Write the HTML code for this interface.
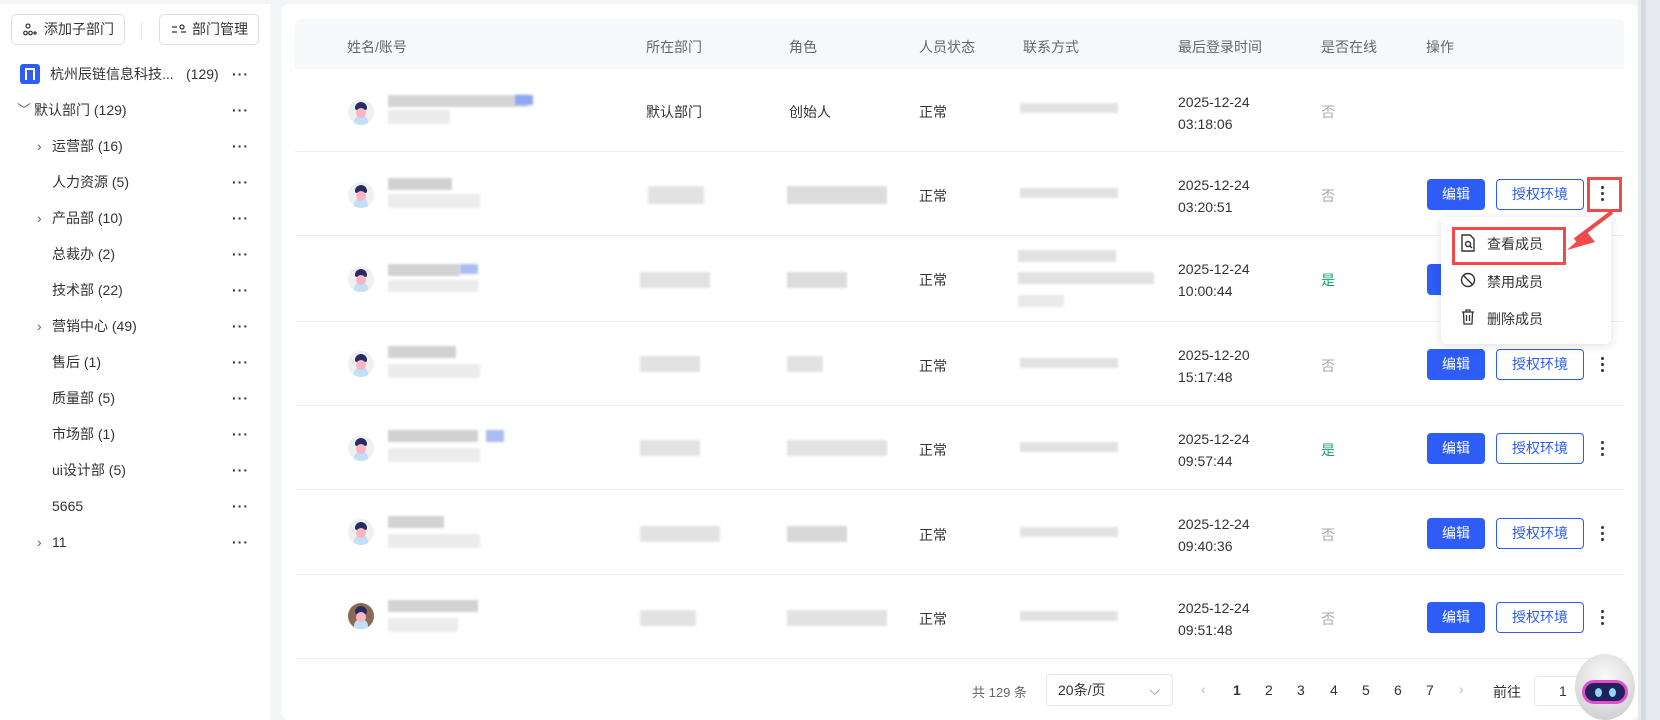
<!DOCTYPE html>
<html><head><meta charset="utf-8"><style>
*{box-sizing:border-box;margin:0;padding:0}
body{width:1660px;height:720px;overflow:hidden;background:#f4f5f7;font-family:"Liberation Sans","Noto Sans CJK SC",sans-serif;font-size:14px;color:#333;position:relative}
.side{position:absolute;left:0;top:4px;width:270px;height:716px;background:#fff}
.btn{position:absolute;height:31px;border:1px solid #dcdfe6;border-radius:5px;background:#fff;font-size:14px;line-height:29px;padding-left:32px;color:#333}
.tr{position:absolute;left:0;width:270px;height:36px;line-height:36px;font-size:14px;color:#333}
.dots{position:absolute;left:232px;top:0;letter-spacing:1px;font-weight:bold;font-size:14px}
.main{position:absolute;left:281px;top:4px;width:1357px;height:716px;background:#fff;border-radius:8px}
.hdr{position:absolute;left:295px;top:19px;width:1329px;height:50px;background:#f7f8fa;border-radius:6px 6px 0 0}
.h{position:absolute;top:37px;font-size:14px;color:#666}
.row{position:absolute;left:295px;width:1329px;border-bottom:1px solid #ebeef5}
.c{position:absolute;font-size:14px;color:#333}
.bl{position:absolute;background:#e2e2e2;filter:blur(1px);border-radius:1px}
.av{position:absolute;width:26px;height:26px;border-radius:50%;background:#f0f0f3;overflow:hidden}
.av:before{content:"";position:absolute;left:7px;top:3px;width:12px;height:8px;background:#2a2a66;border-radius:6px 6px 2px 2px}
.av:after{content:"";position:absolute;left:8px;top:9px;width:10px;height:10px;background:#f7b6c2;border-radius:50%;box-shadow:0 9px 0 2px #bfe0f6}
.ed{position:absolute;left:1427px;width:58px;height:31px;background:#2d5cf6;color:#fff;border-radius:4px;text-align:center;line-height:31px;font-size:14px}
.au{position:absolute;left:1496px;width:88px;height:31px;border:1px solid #2d5cf6;color:#2d5cf6;border-radius:4px;text-align:center;line-height:29px;font-size:14px;background:#fff}
.vd{position:absolute;left:1601px;width:4px}
.vd i{display:block;width:3px;height:3px;background:#333;border-radius:50%;margin-bottom:3px}
</style></head><body>
<div class="side">
 <div class="btn" style="left:11px;top:10px;width:114px">添加子部门<svg style="position:absolute;left:11px;top:8px" width="14" height="13" viewBox="0 0 14 13" fill="none" stroke="#333" stroke-width="1.2"><circle cx="5" cy="3" r="2"/><circle cx="2.5" cy="10" r="1.8"/><circle cx="7.5" cy="10" r="1.8"/><path d="M10 10h4M12 8v4"/></svg></div>
 <div style="position:absolute;left:141px;top:18px;width:1px;height:18px;background:#e3e6ec"></div>
 <div class="btn" style="left:159px;top:10px;width:100px">部门管理<svg style="position:absolute;left:12px;top:9px" width="14" height="12" viewBox="0 0 14 12" fill="none" stroke="#333" stroke-width="1.2"><path d="M0 3h5M0 8h5M9 8h5"/><circle cx="10" cy="3" r="2"/></svg></div>
 <div class="tr" style="top:52px"><span style="position:absolute;left:20px;top:8px;width:20px;height:20px;background:#2d5cf6;border-radius:3px"><span style="position:absolute;left:5px;top:4px;width:10px;height:12px;border:2px solid #fff;border-bottom:none"></span></span><span style="position:absolute;left:50px">杭州辰链信息科技...</span><span style="position:absolute;left:186px">(129)</span><span class="dots">···</span></div>
 <div class="tr" style="top:88px"><span style="position:absolute;left:17px;color:#666">﹀</span><span style="position:absolute;left:34px">默认部门 (129)</span><span class="dots">···</span></div>
 <div class="tr" style="top:124px"><span style="position:absolute;left:37px;color:#666">›</span><span style="position:absolute;left:52px">运营部 (16)</span><span class="dots">···</span></div>
 <div class="tr" style="top:160px"><span style="position:absolute;left:52px">人力资源 (5)</span><span class="dots">···</span></div>
 <div class="tr" style="top:196px"><span style="position:absolute;left:37px;color:#666">›</span><span style="position:absolute;left:52px">产品部 (10)</span><span class="dots">···</span></div>
 <div class="tr" style="top:232px"><span style="position:absolute;left:52px">总裁办 (2)</span><span class="dots">···</span></div>
 <div class="tr" style="top:268px"><span style="position:absolute;left:52px">技术部 (22)</span><span class="dots">···</span></div>
 <div class="tr" style="top:304px"><span style="position:absolute;left:37px;color:#666">›</span><span style="position:absolute;left:52px">营销中心 (49)</span><span class="dots">···</span></div>
 <div class="tr" style="top:340px"><span style="position:absolute;left:52px">售后 (1)</span><span class="dots">···</span></div>
 <div class="tr" style="top:376px"><span style="position:absolute;left:52px">质量部 (5)</span><span class="dots">···</span></div>
 <div class="tr" style="top:412px"><span style="position:absolute;left:52px">市场部 (1)</span><span class="dots">···</span></div>
 <div class="tr" style="top:448px"><span style="position:absolute;left:52px">ui设计部 (5)</span><span class="dots">···</span></div>
 <div class="tr" style="top:484px"><span style="position:absolute;left:52px">5665</span><span class="dots">···</span></div>
 <div class="tr" style="top:520px"><span style="position:absolute;left:37px;color:#666">›</span><span style="position:absolute;left:52px">11</span><span class="dots">···</span></div>
</div>
<div class="main"></div>
<div class="hdr"></div>
<div class="h" style="left:347px">姓名/账号</div><div class="h" style="left:646px">所在部门</div><div class="h" style="left:789px">角色</div><div class="h" style="left:919px">人员状态</div><div class="h" style="left:1023px">联系方式</div><div class="h" style="left:1178px">最后登录时间</div><div class="h" style="left:1321px">是否在线</div><div class="h" style="left:1426px">操作</div>

<div class="row" style="top:69px;height:83px"></div>
<div class="row" style="top:152px;height:84px"></div>
<div class="row" style="top:236px;height:86px"></div>
<div class="row" style="top:322px;height:84px"></div>
<div class="row" style="top:406px;height:84px"></div>
<div class="row" style="top:490px;height:85px"></div>
<div class="row" style="top:575px;height:84px"></div>

<!-- row 1 -->
<div class="av" style="left:348px;top:99px"></div>
<div class="bl" style="left:388px;top:95px;width:140px;height:12px;background:#d4d3d6"></div><div class="bl" style="left:515px;top:95px;width:18px;height:10px;background:#8fa7f3"></div><div class="bl" style="left:388px;top:110px;width:62px;height:14px;background:#ececec"></div>
<div class="c" style="left:646px;top:102px">默认部门</div><div class="c" style="left:789px;top:102px">创始人</div><div class="c" style="left:919px;top:102px">正常</div>
<div class="bl" style="left:1020px;top:103px;width:98px;height:10px"></div>
<div class="c" style="left:1178px;top:91px;line-height:22px">2025-12-24<br>03:18:06</div><div class="c" style="left:1321px;top:102px;color:#aaa">否</div>
<!-- row 2 -->
<div class="av" style="left:348px;top:182px"></div>
<div class="bl" style="left:388px;top:178px;width:64px;height:12px;background:#d0d0d0"></div><div class="bl" style="left:388px;top:194px;width:92px;height:14px;background:#ececec"></div>
<div class="bl" style="left:648px;top:186px;width:56px;height:18px"></div><div class="bl" style="left:787px;top:186px;width:100px;height:18px;background:#dcdcdc"></div>
<div class="c" style="left:919px;top:186px">正常</div>
<div class="bl" style="left:1020px;top:188px;width:98px;height:10px"></div>
<div class="c" style="left:1178px;top:174px;line-height:22px">2025-12-24<br>03:20:51</div><div class="c" style="left:1321px;top:186px;color:#aaa">否</div>
<div class="ed" style="top:179px">编辑</div><div class="au" style="top:179px">授权环境</div>
<div style="position:absolute;left:1587px;top:177px;width:35px;height:35px;border:3px solid #f04b4b"></div>
<div class="vd" style="top:186px"><i></i><i></i><i></i></div>
<!-- row 3 -->
<div class="av" style="left:348px;top:266px"></div>
<div class="bl" style="left:388px;top:264px;width:72px;height:12px;background:#d2d2d2"></div><div class="bl" style="left:460px;top:264px;width:18px;height:10px;background:#a9bdf3"></div><div class="bl" style="left:388px;top:280px;width:90px;height:12px;background:#ececec"></div>
<div class="bl" style="left:640px;top:272px;width:70px;height:16px"></div><div class="bl" style="left:787px;top:272px;width:60px;height:16px;background:#dcdcdc"></div>
<div class="c" style="left:919px;top:270px">正常</div>
<div class="bl" style="left:1018px;top:250px;width:98px;height:12px"></div><div class="bl" style="left:1018px;top:272px;width:136px;height:12px"></div><div class="bl" style="left:1018px;top:295px;width:46px;height:12px;background:#eaeaea"></div>
<div class="c" style="left:1178px;top:258px;line-height:22px">2025-12-24<br>10:00:44</div><div class="c" style="left:1321px;top:270px;color:#1aa36b">是</div>
<div class="ed" style="top:264px"></div>
<!-- row 4 -->
<div class="av" style="left:348px;top:351px"></div>
<div class="bl" style="left:388px;top:346px;width:68px;height:12px;background:#d2d2d2"></div><div class="bl" style="left:388px;top:364px;width:92px;height:14px;background:#ececec"></div>
<div class="bl" style="left:640px;top:356px;width:60px;height:16px"></div><div class="bl" style="left:787px;top:356px;width:36px;height:16px"></div>
<div class="c" style="left:919px;top:356px">正常</div>
<div class="bl" style="left:1020px;top:358px;width:98px;height:10px"></div>
<div class="c" style="left:1178px;top:344px;line-height:22px">2025-12-20<br>15:17:48</div><div class="c" style="left:1321px;top:356px;color:#aaa">否</div>
<div class="ed" style="top:349px">编辑</div><div class="au" style="top:349px">授权环境</div><div class="vd" style="top:357px"><i></i><i></i><i></i></div>
<!-- row 5 -->
<div class="av" style="left:348px;top:435px"></div>
<div class="bl" style="left:388px;top:430px;width:90px;height:12px;background:#d2d2d2"></div><div class="bl" style="left:486px;top:430px;width:18px;height:12px;background:#a9bdf3"></div><div class="bl" style="left:388px;top:448px;width:92px;height:14px;background:#ececec"></div>
<div class="bl" style="left:640px;top:440px;width:60px;height:16px"></div><div class="bl" style="left:787px;top:440px;width:100px;height:16px"></div>
<div class="c" style="left:919px;top:440px">正常</div>
<div class="bl" style="left:1020px;top:442px;width:98px;height:10px"></div>
<div class="c" style="left:1178px;top:428px;line-height:22px">2025-12-24<br>09:57:44</div><div class="c" style="left:1321px;top:440px;color:#1aa36b">是</div>
<div class="ed" style="top:433px">编辑</div><div class="au" style="top:433px">授权环境</div><div class="vd" style="top:441px"><i></i><i></i><i></i></div>
<!-- row 6 -->
<div class="av" style="left:348px;top:519px"></div>
<div class="bl" style="left:388px;top:516px;width:56px;height:12px;background:#d2d2d2"></div><div class="bl" style="left:388px;top:534px;width:92px;height:14px;background:#ececec"></div>
<div class="bl" style="left:640px;top:526px;width:80px;height:16px"></div><div class="bl" style="left:787px;top:526px;width:60px;height:16px;background:#d8d8d8"></div>
<div class="c" style="left:919px;top:525px">正常</div>
<div class="bl" style="left:1020px;top:527px;width:98px;height:10px"></div>
<div class="c" style="left:1178px;top:513px;line-height:22px">2025-12-24<br>09:40:36</div><div class="c" style="left:1321px;top:525px;color:#aaa">否</div>
<div class="ed" style="top:518px">编辑</div><div class="au" style="top:518px">授权环境</div><div class="vd" style="top:526px"><i></i><i></i><i></i></div>
<!-- row 7 -->
<div class="av" style="left:348px;top:603px;background:#8b6a55"></div>
<div class="bl" style="left:388px;top:600px;width:90px;height:12px;background:#d2d2d2"></div><div class="bl" style="left:388px;top:618px;width:70px;height:14px;background:#ececec"></div>
<div class="bl" style="left:640px;top:610px;width:56px;height:16px"></div><div class="bl" style="left:787px;top:610px;width:100px;height:16px"></div>
<div class="c" style="left:919px;top:609px">正常</div>
<div class="bl" style="left:1020px;top:611px;width:98px;height:10px"></div>
<div class="c" style="left:1178px;top:597px;line-height:22px">2025-12-24<br>09:51:48</div><div class="c" style="left:1321px;top:609px;color:#aaa">否</div>
<div class="ed" style="top:602px">编辑</div><div class="au" style="top:602px">授权环境</div><div class="vd" style="top:610px"><i></i><i></i><i></i></div>

<!-- dropdown -->
<div style="position:absolute;left:1441px;top:217px;width:170px;height:127px;background:#fff;border-radius:5px;box-shadow:0 2px 10px rgba(0,0,0,.12)"></div>
<div style="position:absolute;left:1452px;top:227px;width:114px;height:38px;border:3px solid #f04b4b"></div>
<svg style="position:absolute;left:1460px;top:234px" width="16" height="18" viewBox="0 0 16 18" fill="none" stroke="#333" stroke-width="1.4"><path d="M2 1h8l4 4v12H2z"/><circle cx="8" cy="10" r="2.5"/><path d="M10 12l2 2"/></svg>
<div class="c" style="left:1487px;top:234px">查看成员</div>
<svg style="position:absolute;left:1460px;top:272px" width="16" height="16" viewBox="0 0 16 16" fill="none" stroke="#333" stroke-width="1.4"><circle cx="8" cy="8" r="6.5"/><path d="M3.5 3.5l9 9"/></svg>
<div class="c" style="left:1487px;top:272px">禁用成员</div>
<svg style="position:absolute;left:1461px;top:309px" width="14" height="16" viewBox="0 0 14 16" fill="none" stroke="#333" stroke-width="1.3"><path d="M1 3h12M5 3V1h4v2M2.5 3l.5 12h8l.5-12M5.5 6v6M8.5 6v6"/></svg>
<div class="c" style="left:1487px;top:309px">删除成员</div>
<svg style="position:absolute;left:1565px;top:210px" width="50" height="45" viewBox="0 0 50 45"><path d="M47 2L10 30" stroke="#f04b4b" stroke-width="4"/><path d="M2 40L22 22 30 32z" fill="#f04b4b"/></svg>

<!-- pagination -->
<div class="c" style="left:972px;top:682px;color:#666;font-size:13px">共 129 条</div>
<div style="position:absolute;left:1046px;top:674px;width:127px;height:32px;border:1px solid #e4e7ed;border-radius:4px;font-size:14px;line-height:30px;padding-left:11px">20条/页<span style="position:absolute;right:12px;top:0;color:#888">⌵</span></div>
<div class="c" style="left:1201px;top:681px;color:#bbb">‹</div>
<div class="c" style="left:1233px;top:682px;font-weight:bold">1</div>
<div class="c" style="left:1265px;top:682px">2</div><div class="c" style="left:1297px;top:682px">3</div><div class="c" style="left:1330px;top:682px">4</div><div class="c" style="left:1362px;top:682px">5</div><div class="c" style="left:1394px;top:682px">6</div><div class="c" style="left:1426px;top:682px">7</div>
<div class="c" style="left:1459px;top:681px;color:#bbb">›</div>
<div class="c" style="left:1493px;top:682px">前往</div>
<div style="position:absolute;left:1534px;top:676px;width:60px;height:30px;border:1px solid #e4e7ed;border-radius:4px;font-size:14px;line-height:28px;padding-left:24px">1</div>
<div style="position:absolute;left:1575px;top:654px;width:60px;height:66px;border-radius:50%;background:radial-gradient(circle at 50% 35%,#fafafa,#c8c8cc)"><div style="position:absolute;left:7px;top:26px;width:46px;height:24px;border-radius:12px;background:#20235a;border:3px solid #e14fd0"><span style="position:absolute;left:10px;top:5px;width:7px;height:9px;background:#8fd8ff;border-radius:50%"></span><span style="position:absolute;left:24px;top:5px;width:7px;height:9px;background:#8fd8ff;border-radius:50%"></span></div></div>
<div style="position:absolute;left:1638px;top:0;width:22px;height:720px;background:#e8e9ee"></div>
<div style="position:absolute;left:1641px;top:0;width:5px;height:720px;background:#d8dae2"></div>
</body></html>
